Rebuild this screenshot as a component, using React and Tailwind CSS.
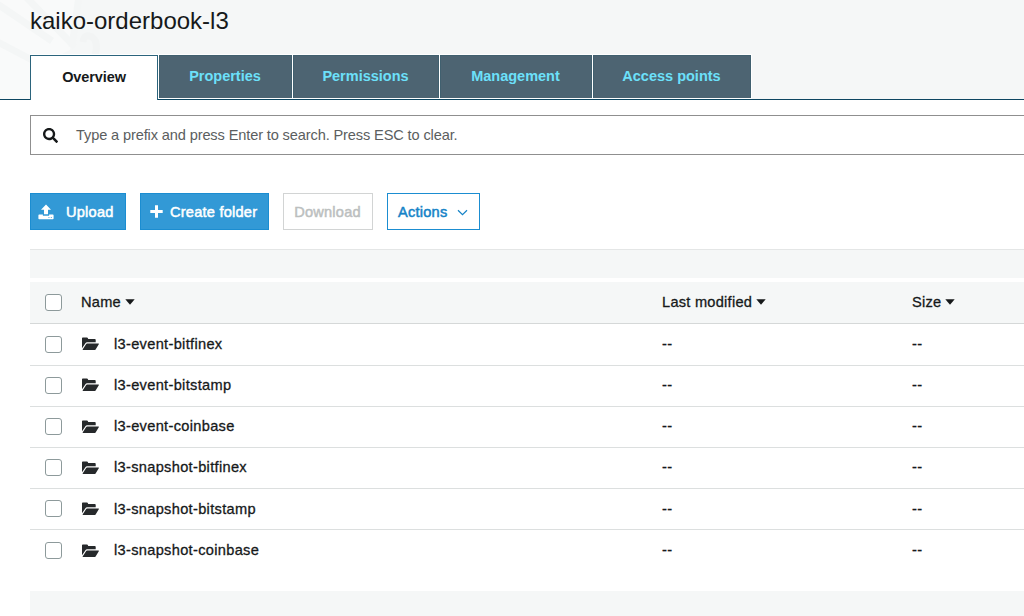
import { FaSearch } from 'react-icons/fa'

const TABS = [
  { label: 'Properties', width: 'w-[133px]' },
  { label: 'Permissions', width: 'w-[146px]' },
  { label: 'Management', width: 'w-[152px]' },
  { label: 'Access points', width: 'w-[158px]' },
]

const FOLDERS = [
  'l3-event-bitfinex',
  'l3-event-bitstamp',
  'l3-event-coinbase',
  'l3-snapshot-bitfinex',
  'l3-snapshot-bitstamp',
  'l3-snapshot-coinbase',
]

function Checkbox() {
  return <span className="block w-[17px] h-[17px] shrink-0 rounded-[3px] border border-[#8d9a9b] bg-white" />
}

function UploadIcon() {
  return (
    <svg className="w-4 h-4 shrink-0" viewBox="0 0 16 16" fill="currentColor">
      <path d="M8 0.5 L13 5.8 H10 V10.3 H6 V5.8 H3 Z" />
      <path fillRule="evenodd" d="M1.2 10.6 H4.9 V11.7 H11.1 V10.6 H14.8 Q15.6 10.6 15.6 11.4 V14.4 Q15.6 15.2 14.8 15.2 H1.2 Q0.4 15.2 0.4 14.4 V11.4 Q0.4 10.6 1.2 10.6 Z M10.4 13.2 V14 H11.5 V13.2 Z M12.8 13.2 V14 H13.9 V13.2 Z" />
    </svg>
  )
}

function PlusIcon() {
  return (
    <svg className="w-[13px] h-[13px] shrink-0" viewBox="0 0 13 13" fill="currentColor">
      <path d="M5 0.3 H8 V5 H12.7 V8 H8 V12.7 H5 V8 H0.3 V5 H5 Z" />
    </svg>
  )
}

function FolderIcon() {
  return (
    <svg className="w-[17px] h-[14px] shrink-0" viewBox="0 0 17 14" fill="#26292b">
      <path d="M0 1.2 Q0 0.4 0.8 0.4 H5 Q5.6 0.4 5.8 1 L6.2 2.1 H12.9 Q13.7 2.1 13.7 2.9 V5.3 H5 Q4.1 5.3 3.6 6 L0 11.2 Z" />
      <path d="M5 6.5 H16.4 Q17.2 6.5 16.8 7.2 L13.6 12.4 Q13.2 13 12.5 13 H1.2 Q0.4 13 0.8 12.3 L4.2 7 Q4.5 6.5 5 6.5 Z" />
    </svg>
  )
}

function ColumnHead({ label, className }) {
  return (
    <div className={`flex items-center gap-1 ${className}`}>
      <span>{label}</span>
      <svg className="w-[10px] h-[6px]" viewBox="0 0 10 6" fill="currentColor"><path d="M0.3 0.3 H9.7 L5 5.7 Z" /></svg>
    </div>
  )
}

function Header() {
  return (
    <header className="relative h-[100px] bg-[#f5f7f7] border-b border-[#0d4661]">
      <svg className="absolute left-0 top-0 w-[110px] h-[99px]" viewBox="0 0 110 99" fill="none" stroke="#f4f6f6" strokeWidth="7">
        <path d="M0 0 H80 L70 50 L30 70 L30 99 H0 Z" fill="#f9fafa" stroke="none" />
        <path d="M-4 3 L52 41 M25 -4 L75 47 M-4 41 L32 60 M79 -4 L72 47" />
        <path d="M83 42 Q84 33 92 37 Q99 42 95 55" stroke="#f2f4f4" />
      </svg>
      <div className="relative flex flex-col h-full pl-[30px]">
        <h1 className="h-[54px] pt-[6px] text-[24px] leading-[30px] text-[#16191a] whitespace-nowrap">kaiko-orderbook-l3</h1>
        <nav className="flex w-[722px] pt-px gap-px bg-white text-[14.5px] font-bold">
          <div className="w-[128px] h-[45px] -mb-px flex items-center justify-center bg-white border border-b-0 border-[#2b647c] text-[#16191a] tracking-[-0.1px]">Overview</div>
          {TABS.map(tab => (
            <div key={tab.label} className={`h-[43px] flex items-center justify-center pr-px bg-[#4d6472] border border-b-0 border-[#40606f] text-[#6ce0fa] ${tab.width}`}>{tab.label}</div>
          ))}
        </nav>
      </div>
    </header>
  )
}

function Toolbar() {
  return (
    <div className="flex items-center gap-[14px] pl-[30px] mt-[38px] whitespace-nowrap text-[14.6px] tracking-[0.22px] [-webkit-text-stroke:0.5px_currentColor]">
      <button className="w-[96px] h-[37px] flex items-center pl-[7px] gap-3 bg-[#3299d6] border border-[#1b8dd1] text-white">
        <UploadIcon /><span className="pt-[3px]">Upload</span>
      </button>
      <button className="w-[129px] h-[37px] flex items-center pl-[9px] gap-[7px] bg-[#3299d6] border border-[#1b8dd1] text-white">
        <PlusIcon /><span className="pt-[3px]">Create folder</span>
      </button>
      <button className="w-[90px] h-[37px] flex items-center justify-center pt-[3px] pr-px border border-[#d2d4d4] text-[#bcbfbf]">Download</button>
      <button className="w-[93px] h-[37px] flex items-center pl-[10px] gap-[10px] border border-[#1b8dd1] text-[#1583c7]">
        <span className="pt-[3px]">Actions</span>
        <svg className="w-[11px] h-[7px] mt-px" viewBox="0 0 11 7" fill="none" stroke="currentColor" strokeWidth="1.2"><path d="M1 1.2 L5.5 5.6 L10 1.2" /></svg>
      </button>
    </div>
  )
}

export default function App() {
  return (
    <div className="w-full h-[616px] overflow-hidden bg-white text-[#16191a] font-['Liberation_Sans',Arial,sans-serif]">
      <Header />
      <div className="ml-[30px] mt-[15px] h-[40px] flex items-center gap-[18px] pl-3 border border-r-0 border-[#8f8f8f]">
        <FaSearch size={15} />
        <span className="pt-[2px] text-[14.6px] tracking-[-0.13px] text-[#5b5e60] whitespace-nowrap">Type a prefix and press Enter to search. Press ESC to clear.</span>
      </div>
      <Toolbar />
      <div className="ml-[30px] mt-[19px] h-[29px] bg-[#f5f7f7] border-t border-[#e4e6e6]" />
      {/* Object list; the thin stroke gives the medium weight */}
      <div className="ml-[30px] mt-1 text-[14.6px] tracking-[0.32px] [-webkit-text-stroke:0.3px_currentColor]">
        <div className="flex items-center h-[42px] pl-[15px] pb-px bg-[#f5f7f7] border-b border-[#d5d8d8] tracking-[0.26px]">
          <Checkbox />
          <ColumnHead label="Name" className="ml-[19px] pt-px w-[581px]" />
          <ColumnHead label="Last modified" className="pt-px w-[250px]" />
          <ColumnHead label="Size" className="pt-px" />
        </div>
        <div className="pt-[0.5px]">
          {FOLDERS.map(name => (
            <div key={name} className="flex items-center h-[41.2px] pl-[15px] pb-[0.8px] border-b border-[#dcdfdf] last:border-b-0">
              <Checkbox />
              <span className="ml-5"><FolderIcon /></span>
              <span className="ml-[15px] pt-px w-[548px]">{name}</span>
              <span className="w-[250px] pt-px">--</span>
              <span className="pt-px">--</span>
            </div>
          ))}
        </div>
      </div>
      <div className="ml-[30px] mt-[19px] h-[30px] bg-[#f5f7f7]" />
    </div>
  )
}
